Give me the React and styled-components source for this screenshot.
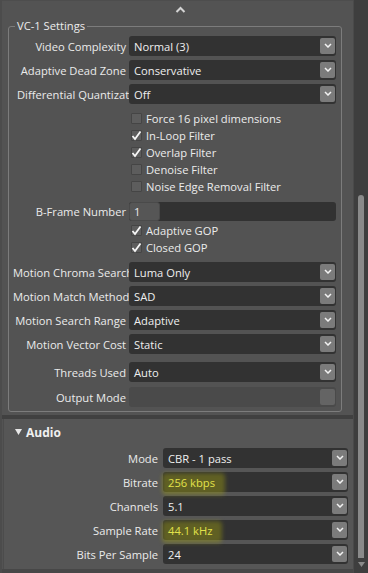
import React from "react";
import styled, { createGlobalStyle } from "styled-components";

const GlobalStyle = createGlobalStyle`
  html, body { margin: 0; padding: 0; background: #535353; }
  body {
    font-family: "Open Sans", "Noto Sans", sans-serif;
    font-size: 11.2px;
    color: #ececec;
  }
  * { box-sizing: border-box; }
`;

const Window = styled.div`
  width: 368px;
  height: 573px;
  display: flex;
  overflow: hidden;
  background: #535353;
`;

const Content = styled.div`
  flex: 1;
  min-width: 0;
  display: flex;
  flex-direction: column;
  border-left: 2px solid #4c4c4c;
`;

const TopBar = styled.div`
  height: 18px;
  flex: none;
  display: flex;
  justify-content: center;
  align-items: center;
  padding-left: 6px;
  border-top: 1px solid #4d4d4d;
`;

const Fieldset = styled.fieldset`
  min-width: 0;
  margin: 0 11px 0 6px;
  padding: 2px 5px 4px 0;
  border: 1px solid #7c7c7c;
  border-radius: 3px;
  display: flex;
  flex-direction: column;
`;

const Legend = styled.legend`
  margin-left: 6px;
  padding: 0 2px;
  line-height: 16px;
  font-size: 11.2px;
  color: #ececec;
`;

const Row = styled.div`
  display: flex;
  align-items: center;
  height: 20px;
  flex: none;
  margin-top: ${(p) => p.$gap ?? 4}px;
`;

const Label = styled.div`
  flex: 1;
  min-width: 0;
  white-space: nowrap;
  overflow: hidden;
  text-overflow: clip;
  text-align: right;
  padding-left: ${(p) => p.$inset ?? 4}px;
  padding-right: ${(p) => p.$pad ?? 3}px;
  color: #ebebeb;
`;

const Select = styled.div`
  width: ${(p) => p.$width}px;
  flex: none;
  height: 20px;
  display: flex;
  align-items: center;
  padding-left: 5px;
  background: ${(p) => (p.$disabled ? "#4a4a4a" : "#323232")};
  border-radius: 3px;
  color: ${(p) => (p.$accent ? "#e2e24a" : "#efefef")};
`;

const Value = styled.span`
  flex: 1;
  position: relative;
`;

const Highlight = styled.span`
  position: relative;
  display: inline-block;
  &::before {
    content: "";
    position: absolute;
    left: -6px;
    right: -10px;
    top: -2px;
    bottom: -5px;
    background: rgba(170, 170, 10, 0.38);
    filter: blur(2px);
    border-radius: 4px;
  }
  > span {
    position: relative;
  }
`;

const DropButton = styled.div`
  width: 15px;
  height: 16px;
  margin-right: 1px;
  border-radius: 2px;
  background: ${(p) => (p.$disabled ? "#646464" : "#7b7b7b")};
  display: flex;
  align-items: flex-start;
  justify-content: center;
  padding-top: 5px;
`;

const CheckRow = styled.div`
  display: flex;
  align-items: center;
  height: 17px;
  flex: none;
  padding-left: 122px;
  gap: 4px;
  margin-top: ${(p) => p.$gap ?? 0}px;
`;

const Box = styled.div`
  width: 11px;
  height: 11px;
  background: #5d5d5d;
  border: 1px solid #454545;
  border-radius: 1px;
  display: flex;
  align-items: center;
  justify-content: center;
  overflow: visible;
`;

const Spin = styled.div`
  width: 207px;
  flex: none;
  height: 19px;
  display: flex;
  background: #323232;
  border-radius: 3px;
`;

const SpinField = styled.div`
  width: 31px;
  height: 19px;
  background: #565656;
  border: 1px solid #4a4a4a;
  border-radius: 3px;
  padding-left: 4px;
  display: flex;
  align-items: center;
`;

const Separator = styled.div`
  height: 6px;
  flex: none;
  margin-top: 1px;
  border-bottom: 4px solid #404040;
`;

const AudioPanel = styled.div`
  margin-left: 1px;
  padding: 0 5px 5px 0;
  background: #565656;
  border-left: 1px solid #4c4c4c;
  display: flex;
  flex-direction: column;
`;

const AudioHeader = styled.div`
  height: 26px;
  display: flex;
  align-items: center;
  gap: 4px;
  padding-left: 11px;
  font-weight: 700;
  font-size: 12px;
  color: #f0f0f0;
`;

const Footer = styled.div`
  flex: 1;
  background: #474747;
`;

const ScrollTrack = styled.div`
  width: 15px;
  flex: none;
  background: #3e3e3e;
  border-left: 1px solid #4a4a4a;
  display: flex;
  flex-direction: column;
  align-items: center;
  padding: 195px 0 3px 0;
`;

const Thumb = styled.div`
  width: 6px;
  flex: 1;
  background: #8a8a8a;
  border-radius: 3px 3px 0 0;
`;

const ArrowDown = styled.div`
  height: 12px;
  display: flex;
  align-items: center;
  justify-content: center;
`;

function Chevron({ up }) {
  return up ? (
    <svg width="11" height="7" viewBox="0 0 11 7">
      <path d="M1.5 6 L5.5 2 L9.5 6" fill="none" stroke="#d4d4d4" strokeWidth="2" />
    </svg>
  ) : (
    <svg width="8" height="5" viewBox="0 0 8 5">
      <path d="M1 1 L4 4 L7 1" fill="none" stroke="#f2f2f2" strokeWidth="1.5" />
    </svg>
  );
}

function Check() {
  return (
    <svg width="11" height="11" viewBox="0 0 11 11" style={{ flex: "none" }}>
      <path d="M1.5 6 L4 9 L9.5 1.5" fill="none" stroke="#f6f6f6" strokeWidth="1.8" />
    </svg>
  );
}

function Dropdown({ width = 207, value, disabled, accent }) {
  return (
    <Select $width={width} $disabled={disabled} $accent={accent}>
      <Value>
        {accent ? (
          <Highlight>
            <span>{value}</span>
          </Highlight>
        ) : (
          value
        )}
      </Value>
      <DropButton $disabled={disabled}>{!disabled && <Chevron />}</DropButton>
    </Select>
  );
}

function Field({ label, value, gap, inset, disabled }) {
  return (
    <Row $gap={gap}>
      <Label $inset={inset}>{label}</Label>
      <Dropdown value={value} disabled={disabled} />
    </Row>
  );
}

function Checkbox({ label, checked, gap }) {
  return (
    <CheckRow $gap={gap}>
      <Box>{checked && <Check />}</Box>
      <span>{label}</span>
    </CheckRow>
  );
}

const audioRows = [
  { label: "Mode", value: "CBR - 1 pass" },
  { label: "Bitrate", value: "256 kbps", accent: true },
  { label: "Channels", value: "5.1" },
  { label: "Sample Rate", value: "44.1 kHz", accent: true },
  { label: "Bits Per Sample", value: "24" },
];

export default function App() {
  return (
    <>
      <GlobalStyle />
      <Window>
        <Content>
          <TopBar>
            <Chevron up />
          </TopBar>
          <Fieldset>
            <Legend>VC-1 Settings</Legend>
            <Field label="Video Complexity" value="Normal (3)" gap={0} />
            <Field label="Adaptive Dead Zone" value="Conservative" />
            <Field label="Differential Quantization" value="Off" inset={8} />
            <Checkbox label="Force 16 pixel dimensions" gap={6} />
            <Checkbox label="In-Loop Filter" checked />
            <Checkbox label="Overlap Filter" checked />
            <Checkbox label="Denoise Filter" />
            <Checkbox label="Noise Edge Removal Filter" />
            <Row $gap={6}>
              <Label>B-Frame Number</Label>
              <Spin>
                <SpinField>1</SpinField>
              </Spin>
            </Row>
            <Checkbox label="Adaptive GOP" checked gap={1} />
            <Checkbox label="Closed GOP" checked />
            <Field label="Motion Chroma Search" value="Luma Only" gap={6} />
            <Field label="Motion Match Method" value="SAD" />
            <Field label="Motion Search Range" value="Adaptive" />
            <Field label="Motion Vector Cost" value="Static" />
            <Field label="Threads Used" value="Auto" gap={8} />
            <Field label="Output Mode" value="" disabled gap={5} />
          </Fieldset>
          <Separator />
          <AudioPanel>
            <AudioHeader>
              <svg width="7" height="6" viewBox="0 0 7 6">
                <path d="M0 0 H7 L3.5 6 Z" fill="#e8e8e8" />
              </svg>
              Audio
            </AudioHeader>
            {audioRows.map((r, i) => (
              <Row key={r.label} $gap={i === 0 ? 3 : 4}>
                <Label $pad={5}>{r.label}</Label>
                <Dropdown width={185} value={r.value} accent={r.accent} />
              </Row>
            ))}
          </AudioPanel>
          <Footer />
        </Content>
        <ScrollTrack>
          <Thumb />
          <ArrowDown>
            <svg width="7" height="5" viewBox="0 0 7 5">
              <path d="M0 0 H7 L3.5 5 Z" fill="#8a8a8a" />
            </svg>
          </ArrowDown>
        </ScrollTrack>
      </Window>
    </>
  );
}
